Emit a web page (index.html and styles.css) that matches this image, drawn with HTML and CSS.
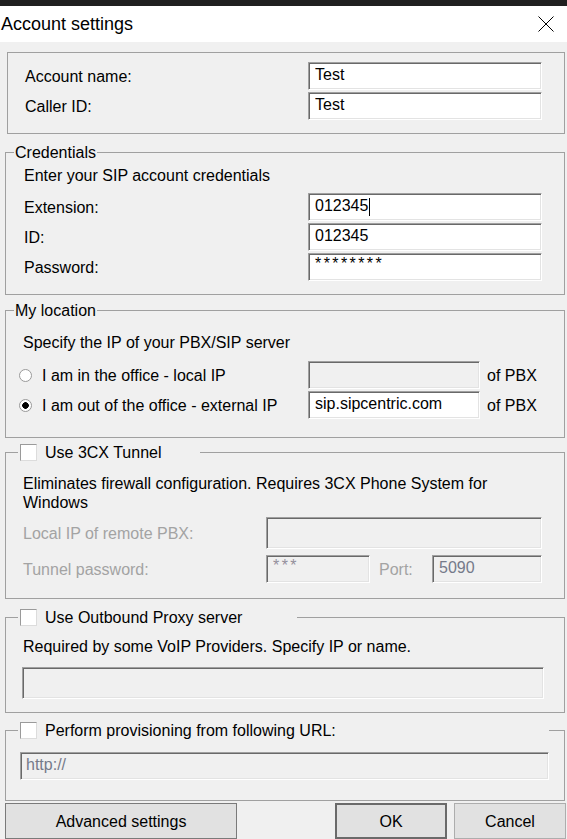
FILE: index.html
```html
<!DOCTYPE html>
<html lang="en">
<head>
	<meta charset="UTF-8">
	<meta name="viewport" content="width=device-width, initial-scale=1.0">
	<title>Account settings</title>
	<link rel="stylesheet" href="styles.css">
</head>
<body>
	<div class="topbar"></div>
	<div class="titlebar">
		<span class="title">Account settings</span>
		<svg class="close" width="16" height="16" viewBox="0 0 16 16">
			<path d="M0.5 0.5L15.5 15.5M15.5 0.5L0.5 15.5" stroke="#000" stroke-width="1" fill="none"/>
		</svg>
	</div>

	<div class="dialog">
		<div class="group account">
			<div class="fields">
				<label for="accName">Account name:</label>
				<input type="text" id="accName" value="Test">
				<label for="callerId">Caller ID:</label>
				<input type="text" id="callerId" value="Test">
			</div>
		</div>

		<fieldset class="group credentials">
			<legend>Credentials</legend>
			<div class="body">
				<p class="hint">Enter your SIP account credentials</p>
				<div class="fields">
					<label for="ext">Extension:</label>
					<span class="caret-field"><input type="text" id="ext" value="012345"></span>
					<label for="sipId">ID:</label>
					<input type="text" id="sipId" value="012345">
					<label for="pwd">Password:</label>
					<input type="text" id="pwd" class="stars" value="********">
				</div>
			</div>
		</fieldset>

		<fieldset class="group location">
			<legend>My location</legend>
			<div class="body">
				<p class="hint">Specify the IP of your PBX/SIP server</p>
				<div class="ip-row">
					<label class="radio"><input type="radio" name="loc">I am in the office - local IP</label>
					<input type="text" class="ip" disabled>
					<span class="suffix">of PBX</span>
				</div>
				<div class="ip-row">
					<label class="radio"><input type="radio" name="loc" checked>I am out of the office - external IP</label>
					<input type="text" class="ip" value="sip.sipcentric.com">
					<span class="suffix">of PBX</span>
				</div>
			</div>
		</fieldset>

		<fieldset class="group tunnel">
			<legend class="check"><input type="checkbox" id="useTunnel"><label for="useTunnel">Use 3CX Tunnel</label></legend>
			<div class="body">
				<p class="hint">Eliminates firewall configuration. Requires 3CX Phone System for Windows</p>
				<div class="tunnel-fields">
					<label class="off">Local IP of remote PBX:</label>
					<input type="text" class="wide tall" disabled>
					<label class="off">Tunnel password:</label>
					<input type="text" class="pale stars" value="***" disabled>
					<label class="off port">Port:</label>
					<input type="text" class="dim" value="5090" disabled>
				</div>
			</div>
		</fieldset>

		<fieldset class="group outbound">
			<legend class="check"><input type="checkbox" id="useProxy"><label for="useProxy">Use Outbound Proxy server</label></legend>
			<div class="body">
				<p class="hint">Required by some VoIP Providers. Specify IP or name.</p>
				<input type="text" class="full" disabled>
			</div>
		</fieldset>

		<fieldset class="group provision">
			<legend class="check"><input type="checkbox" id="useProv"><label for="useProv">Perform provisioning from following URL:</label></legend>
			<div class="body">
				<input type="text" class="full dim" value="http://" disabled>
			</div>
		</fieldset>

		<div class="actions">
			<button class="advanced">Advanced settings</button>
			<button class="ok">OK</button>
			<button class="cancel">Cancel</button>
		</div>
	</div>
</body>
</html>
```

FILE: styles.css
```css
html, body {
	margin: 0;
	overflow: hidden;
}

body {
	font-family: "Liberation Sans", Arial, sans-serif;
	font-size: 16px;
	line-height: 19px;
	color: #000;
	background-color: #f0f0f0;
}

.topbar {
	height: 6px;
	background-color: #202020;
}

.titlebar {
	display: flex;
	align-items: center;
	justify-content: space-between;
	height: 36px;
	padding-left: 1px;
	background-color: #fff;
}

.title {
	font-size: 18px;
}

.close {
	margin-right: 13px;
}

/* group boxes */
.group {
	border: 1px solid #a0a0a0;
	margin: 0 2px 0 5px;
	padding: 0;
	min-width: 0;
}

.group legend {
	margin-left: 8px;
	padding: 0 1px;
	line-height: 19px;
}

.group legend.check {
	display: flex;
	align-items: center;
	gap: 8px;
	margin-left: 12px;
	padding: 0 0 0 2px;
	box-sizing: border-box;
}

.hint {
	margin: 0;
}

.fields {
	display: grid;
	grid-template-columns: 1fr 234px;
	grid-auto-rows: 28px;
	row-gap: 2px;
	align-items: center;
}

/* inputs */
input[type="text"] {
	box-sizing: border-box;
	height: 28px;
	margin: 0;
	padding: 0 6px 3px;
	font: inherit;
	color: #000;
	background-color: #fff;
	border: 1px solid;
	border-color: #a0a0a0 #fff #fff #a0a0a0;
	box-shadow: inset 1px 1px 0 #696969, inset -1px -1px 0 #e3e3e3;
	border-radius: 0;
	outline: none;
}

input[type="text"]:disabled {
	background-color: #f0f0f0;
	color: #6d6d6d;
}

input.stars {
	letter-spacing: 2.4px;
	padding-bottom: 6px;
}

input.pale:disabled {
	color: #948f9c;
}

input.dim:disabled {
	color: #757a8a;
}

.caret-field {
	position: relative;
	display: block;
	height: 28px;
}

.caret-field input {
	display: block;
	width: 100%;
}

/* text cursor left in the focused field */
.caret-field::after {
	content: "";
	position: absolute;
	left: 61px;
	top: 5px;
	width: 1px;
	height: 18px;
	background-color: #000;
}

input[type="radio"] {
	appearance: none;
	width: 13px;
	height: 13px;
	margin: 0 10px 0 0;
	border: 1px solid #9a9a9a;
	border-radius: 50%;
	background-color: #fff;
	flex: none;
}

input[type="radio"]:checked {
	background: radial-gradient(circle, #000 0 3px, #fff 3.6px);
}

input[type="checkbox"] {
	appearance: none;
	width: 17px;
	height: 17px;
	margin: 0;
	background-color: #fff;
	border: 1px solid;
	border-color: #9a9a9a #dcdcdc #dcdcdc #9a9a9a;
	flex: none;
}

.account {
	margin: 10px 2px 0 7px;
	padding: 9px 22px 13px 17px;
}

.credentials {
	margin-top: 9px;
}

.credentials .body {
	padding: 4px 22px 13px 18px;
}

.credentials .hint {
	margin-bottom: 8px;
}

.location {
	margin-top: 6px;
}

.location .body {
	padding: 13px 22px 18px 13px;
}

.location .hint {
	margin: 0 0 9px 4px;
}

.ip-row {
	display: flex;
	align-items: center;
}

.ip-row + .ip-row {
	margin-top: 2px;
}

.radio {
	display: flex;
	align-items: center;
	width: 289px;
}

input.ip {
	width: 172px;
}

.suffix {
	margin-left: 7px;
}

.tunnel {
	margin-top: 5px;
}

.tunnel legend {
	width: 182px;
}

.tunnel .body {
	padding: 12px 22px 15px 17px;
}

.tunnel .hint {
	margin-bottom: 5px;
}

.tunnel-fields {
	display: grid;
	grid-template-columns: 1fr 104px 62px 110px;
	grid-template-rows: 32px 28px;
	row-gap: 6px;
	align-items: center;
}

.tunnel-fields .wide {
	grid-column: 2 / 5;
}

.tunnel-fields .tall {
	height: 32px;
}

.off {
	color: #a3a3a3;
}

.port {
	padding-left: 9px;
}

.outbound {
	margin-top: 9px;
}

.outbound legend {
	width: 279px;
}

.outbound .body {
	padding: 10px 20px 13px 16px;
}

.outbound .hint {
	margin-left: 1px;
}

input.full {
	display: block;
	width: 100%;
}

.outbound input.full {
	height: 32px;
	margin-top: 11px;
}

.provision {
	margin-top: 8px;
}

.provision legend {
	width: 531px;
}

.provision .body {
	padding: 12px 15px 20px 14px;
}

.provision input.full {
	padding-left: 5px;
}

/* buttons */
.actions {
	display: flex;
	margin-top: 2px;
	padding: 0 1px 0 5px;
}

.actions button {
	height: 36px;
	font: inherit;
	color: #000;
	background-color: #e1e1e1;
	border: 1px solid #adadad;
	border-radius: 0;
	padding: 0;
}

.advanced {
	width: 232px;
	border-color: #7a7a7a !important;
}

.ok {
	width: 112px;
	margin-left: auto;
	border: 2px solid #6a6a6a !important;
}

.cancel {
	width: 112px;
	margin-left: 7px;
}
```
